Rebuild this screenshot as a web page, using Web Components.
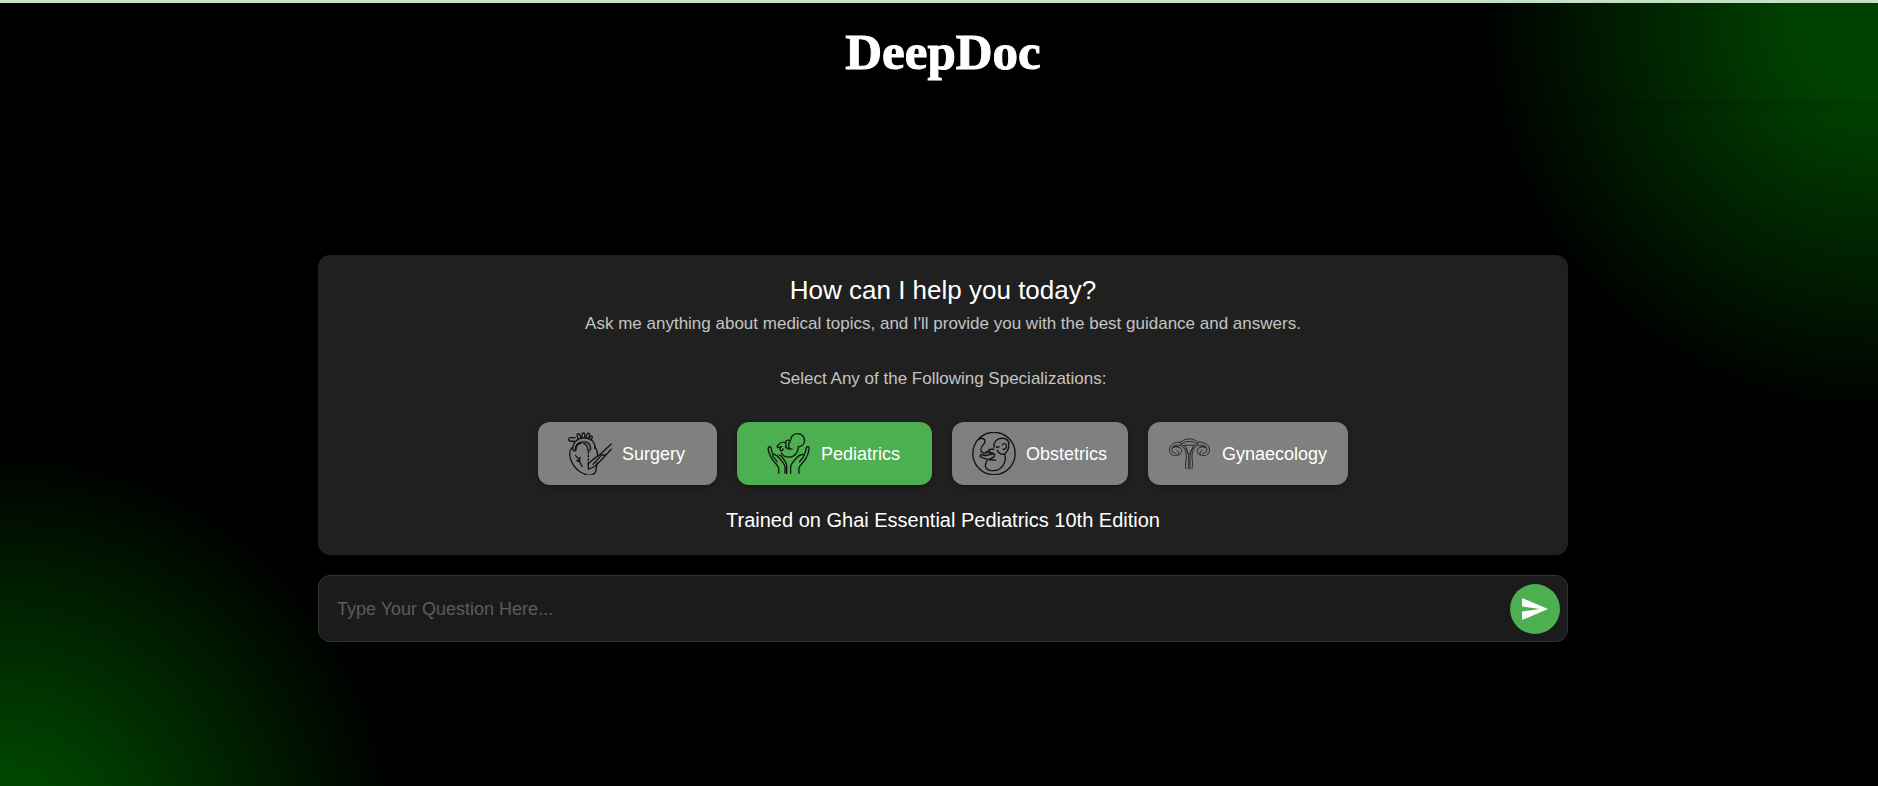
<!DOCTYPE html>
<html lang="en">
<head>
<meta charset="utf-8">
<meta name="viewport" content="width=device-width, initial-scale=1">
<title>DeepDoc</title>
<style>
  html, body { margin: 0; min-height: 100%; }
  body { background: #000; font-family: "Liberation Sans", Arial, sans-serif; }
</style>
</head>
<body>
<deep-doc-app></deep-doc-app>

<script>
const define = (name, html, setup) => {
  const template = document.createElement('template');
  template.innerHTML = html;
  customElements.define(name, class extends HTMLElement {
    constructor() {
      super();
      this.attachShadow({ mode: 'open' }).append(template.content.cloneNode(true));
    }
    connectedCallback() { if (setup) setup(this, this.shadowRoot); }
  });
};

const icons = {
  surgery: `<svg viewBox="108 53 132 130" stroke-width="4">
    <path d="M129 70H115a5 5 0 0 0 0 11h12M138 74l-3-10a4 4 0 0 1 8-3l4 10M150 70v-10a4 4 0 0 1 8 0v10M162 71l3-11a4 4 0 0 1 8 2l-3 12M172 72l3-6a4 4 0 0 1 6 4l-4 8"/>
    <path d="M122 104c0-20 14-33 34-33 21 0 34 13 33 31M129 106c1-14 10-23 26-23 11 0 17 4 20 14v7M122 104a5 5 0 0 0 10 2c-1-12 7-18 15-19M155 88c8 2 12 8 12 18 3 5 10 3 9-4-1-10-5-15-11-18"/>
    <path d="M119 100c-14 18-3 54 25 73 18 11 35 13 44 5 8-8 3-19 8-32M188 98c6 7 9 16 9 26"/>
    <path d="M169 112v37" stroke-dasharray="5 6"/>
    <path d="M238 89l-36 34c-15 9-23 17-33 26v16c14-3 25-11 35-23l34-37M202 123l19-1M205 128l-22 23"/>
    <path d="M130 124c7 5 11 12 13 19l7 14M142 142l2-12M134 139l9 5"/>
  </svg>`,
  pediatrics: `<svg viewBox="106 53 132 130" stroke-width="4">
    <path d="M178 75c0-10 9-17 20-17 12 0 21 9 21 21 0 10-8 18-19 19 0 17-11 31-28 31-12 0-20-5-23-13"/>
    <path d="M176 79c-5-3-13-1-14 4l1 15M162 85c-8-2-18 0-21 6-6 3-6 9-1 9l10-3c-7 5-6 12-2 12 4 1 6-2 6-5M161 98l8 6 12 1M175 79c2 3-1 7-4 8v10c0 4 3 5 5 7"/>
    <path d="M141 178v-16c-2-10-15-18-20-27-6-10-12-21-12-33 1-6 8-6 9 0 1 9 3 15 7 20M160 178v-19c0-10-11-19-19-29-7-8-17-12-18-6-1 4 8 10 13 19M202 178v-16c2-10 15-18 20-27 6-10 10-21 11-33-1-6-8-6-9 0-1 9-3 15-7 20M177 178v-19c0-10 10-19 19-29 7-8 21-12 22-6 1 4-9 10-14 19M165 178v-23c0-9-7-17-14-26-2-4-6-7-9-7"/>
  </svg>`,
  obstetrics: `<svg viewBox="77 53 132 130" stroke-width="4">
    <circle cx="143" cy="118" r="64"/>
    <path d="M97 76c5-6 17-4 19 3 2 9-13 16-13 28 0 9 13 13 20 7"/>
    <path d="M143 99c-2-15 8-27 24-27 13 0 21 8 21 20 0 14-7 22-13 28 8 25-10 50-34 50-23 0-27-13-22-25l3-6"/>
    <path d="M150 97c2 3 6 3 8 0M168 92c4-6 13-5 13 3 0 7-6 12-11 10M143 105c-9 1-15-2-17 4l6 6 10 3M153 108c4 10 12 13 22 12M142 119l-25 5-13-3c-4 2-4 7 0 8l14 5 10 2 14-7 4-8M128 137l20 1M119 112l12 5"/>
  </svg>`,
  gynaecology: `<svg viewBox="86 53 132 130" stroke-width="3" stroke="#2b2526">
    <path d="M123 84c18-14 35-14 53 0 16-2 34 6 35 21 1 13-9 21-20 19-14-1-20-9-16-18 3-8 13-10 25-8M123 84c-16-2-32 6-33 21-1 13 8 21 19 19 14-1 21-9 17-18-3-8-12-10-24-8"/>
    <path d="M128 88c15-9 29-9 43 0M126 94c-13-4-28 0-29 11 0 8 5 13 12 13M174 94c13-4 28 0 29 11 0 8-5 13-12 13M99 101c9-6 21-5 25 3M201 101c-9-6-21-5-24 3M112 108c5 4 7 8 5 13M188 108c-5 4-7 8-5 13"/>
    <path d="M123 84l4 11c11 8 13 18 14 31 0 14-5 24-1 38M176 84l-4 11c-11 8-13 18-14 31 0 14 5 24 0 38M133 93c8 9 12 18 15 31v20M166 93c-8 9-12 18-14 31v20M148 146v18M152 146v18M132 93h35M138 97l9 23M162 97l-10 23"/>
  </svg>`
};

define('app-header', `
  <style>
    :host { display: block; box-shadow: 0 4px 10px rgba(0, 0, 0, .15); }
    header { height: 98px; display: flex; align-items: center; justify-content: center; }
    h1 { margin: 0; color: #fff; font: bold 51px/58px "Liberation Serif", serif; -webkit-text-stroke: 1px #fff; }
  </style>
  <header><h1><slot></slot></h1></header>`);

define('specialty-button', `
  <style>
    :host { display: block; }
    button {
      display: flex; align-items: center; gap: 10px;
      border: 0; border-radius: 12px; padding: 10px 21px 10px 20px;
      background: #808080; color: #fff; font: 18px/22px "Liberation Sans", Arial, sans-serif;
      box-shadow: 0 2px 5px rgba(0, 0, 0, .3); cursor: pointer;
    }
    :host([roomy]) button { padding: 10px 32px 10px 30px; }
    :host([selected]) button { background: #4caf50; }
    svg { display: block; width: 44px; height: 43px; fill: none; stroke-linecap: round; stroke-linejoin: round; }
    svg:not([stroke]) { stroke: #111; }
  </style>
  <button type="button"><span class="icon"></span><slot></slot></button>`,
  (host, root) => {
    root.querySelector('.icon').innerHTML = icons[host.getAttribute('icon')];
    root.querySelector('button').setAttribute('aria-pressed', host.hasAttribute('selected'));
  });

define('welcome-card', `
  <style>
    :host { display: block; background: #202020; border-radius: 12px; padding: 19px 20px 23px; text-align: center; color: #fff; }
    h2 { margin: 0; font-size: 26px; line-height: 32px; font-weight: 400; }
    p { margin: 0; color: #c4c4c4; font-size: 17px; line-height: 20px; }
    .intro { margin-top: 8px; }
    .choose { margin-top: 35px; }
    .choices { display: flex; flex-wrap: wrap; justify-content: center; gap: 20px; margin: 33px 0 23px; }
    .source { color: #fff; font-size: 20px; line-height: 24px; }
  </style>
  <h2>How can I help you today?</h2>
  <p class="intro">Ask me anything about medical topics, and I'll provide you with the best guidance and answers.</p>
  <p class="choose">Select Any of the Following Specializations:</p>
  <div class="choices"><slot></slot></div>
  <p class="source">Trained on Ghai Essential Pediatrics 10th Edition</p>`);

define('question-box', `
  <style>
    :host { display: block; }
    form {
      display: flex; align-items: center; padding: 8px 7px 7px 18px;
      background: #1b1b1b; border: 1px solid #333; border-radius: 12px;
    }
    input {
      flex: 1; min-width: 0; padding: 0; border: 0; outline: 0; background: none;
      color: #fff; font: 18px/24px "Liberation Sans", Arial, sans-serif;
    }
    input::placeholder { color: #5c5c5c; opacity: 1; }
    button {
      width: 50px; height: 50px; padding: 0; border: 0; border-radius: 50%;
      background: #4caf50; display: grid; place-items: center; cursor: pointer;
    }
    svg { width: 26px; height: 22px; fill: #fff; }
  </style>
  <form>
    <input type="text" aria-label="Question" placeholder="Type Your Question Here...">
    <button type="submit" aria-label="Send">
      <svg viewBox="0 0 26 22"><path d="M0 0 26 11 0 22V13.500L18 11 0 8.500Z"/></svg>
    </button>
  </form>`,
  (host, root) => root.querySelector('form').addEventListener('submit', e => e.preventDefault()));

define('deep-doc-app', `
  <style>
    :host {
      display: block; box-sizing: border-box; min-height: 100vh;
      border-top: 3px solid #c8e6c9; padding-left: 8px;
      background:
        radial-gradient(circle 400px at 100% 16px, #004200 20%, transparent) no-repeat,
        radial-gradient(circle 400px at 0 calc(100% + 60px), #004400 20%, transparent) no-repeat,
        #000;
    }
    main { display: grid; gap: 20px; max-width: 1250px; margin: 0 auto; padding: 154px 20px 40px; }
  </style>
  <app-header>DeepDoc</app-header>
  <main>
    <welcome-card>
      <specialty-button icon="surgery" roomy>Surgery</specialty-button>
      <specialty-button icon="pediatrics" roomy selected>Pediatrics</specialty-button>
      <specialty-button icon="obstetrics">Obstetrics</specialty-button>
      <specialty-button icon="gynaecology">Gynaecology</specialty-button>
    </welcome-card>
    <question-box></question-box>
  </main>`);
</script>
</body>
</html>
